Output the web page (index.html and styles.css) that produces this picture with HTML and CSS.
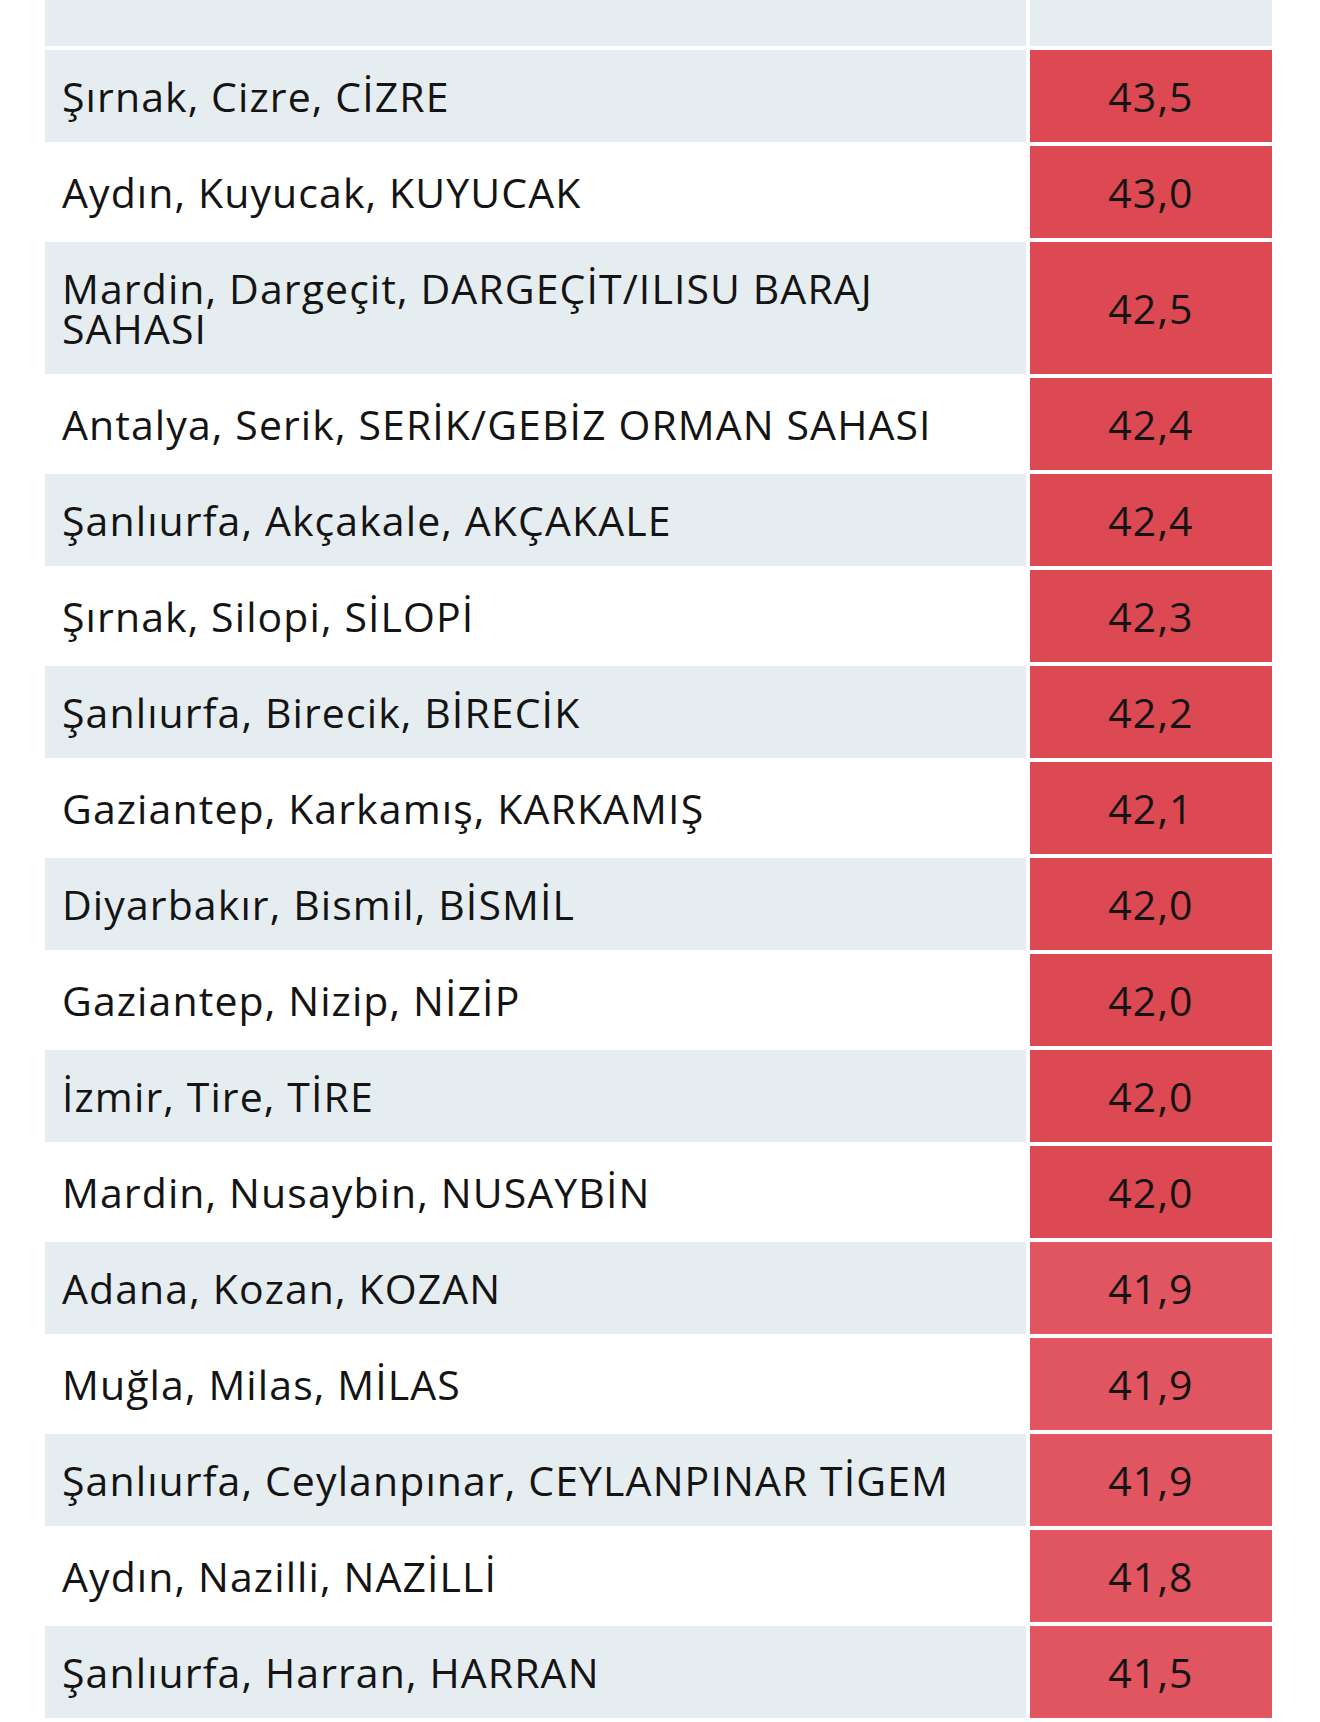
FILE: index.html
```html
<!DOCTYPE html>
<html lang="tr">
<head>
<meta charset="utf-8">
<title>Sıcaklık</title>
<link rel="stylesheet" href="styles.css">
</head>
<body>
<div class="table">
  <div class="cell name stripe head"></div><div class="cell val stripe head"></div>

  <div class="cell name stripe">Şırnak, Cizre, CİZRE</div><div class="cell val hot">43,5</div>
  <div class="cell name">Aydın, Kuyucak, KUYUCAK</div><div class="cell val hot">43,0</div>
  <div class="cell name stripe">Mardin, Dargeçit, DARGEÇİT/ILISU BARAJ SAHASI</div><div class="cell val hot">42,5</div>
  <div class="cell name">Antalya, Serik, SERİK/GEBİZ ORMAN SAHASI</div><div class="cell val hot">42,4</div>
  <div class="cell name stripe">Şanlıurfa, Akçakale, AKÇAKALE</div><div class="cell val hot">42,4</div>
  <div class="cell name">Şırnak, Silopi, SİLOPİ</div><div class="cell val hot">42,3</div>
  <div class="cell name stripe">Şanlıurfa, Birecik, BİRECİK</div><div class="cell val hot">42,2</div>
  <div class="cell name">Gaziantep, Karkamış, KARKAMIŞ</div><div class="cell val hot">42,1</div>
  <div class="cell name stripe">Diyarbakır, Bismil, BİSMİL</div><div class="cell val hot">42,0</div>
  <div class="cell name">Gaziantep, Nizip, NİZİP</div><div class="cell val hot">42,0</div>
  <div class="cell name stripe">İzmir, Tire, TİRE</div><div class="cell val hot">42,0</div>
  <div class="cell name">Mardin, Nusaybin, NUSAYBİN</div><div class="cell val hot">42,0</div>
  <div class="cell name stripe">Adana, Kozan, KOZAN</div><div class="cell val warm">41,9</div>
  <div class="cell name">Muğla, Milas, MİLAS</div><div class="cell val warm">41,9</div>
  <div class="cell name stripe">Şanlıurfa, Ceylanpınar, CEYLANPINAR TİGEM</div><div class="cell val warm">41,9</div>
  <div class="cell name">Aydın, Nazilli, NAZİLLİ</div><div class="cell val warm">41,8</div>
  <div class="cell name stripe">Şanlıurfa, Harran, HARRAN</div><div class="cell val warm">41,5</div>
  <div class="cell name"></div><div class="cell val warm"></div>
</div>
</body>
</html>
```
FILE: styles.css
```css
html, body {
  margin: 0;
  padding: 0;
  background: #ffffff;
}

body {
  font-family: "Open Sans", "Noto Sans", sans-serif;
  color: #141414;
  overflow: hidden;
}

.table {
  display: grid;
  grid-template-columns: 981px 242px;
  column-gap: 4px;
  row-gap: 4px;
  margin-left: 45px;
}

.cell {
  font-size: 41px;
  line-height: 40px;
  letter-spacing: 1.1px;
  padding: 26px 16px 26px 17px;
  min-height: 40px;
  display: flex;
  align-items: center;
}

.cell.head {
  height: 46px;
  min-height: 0;
  padding: 0;
  box-sizing: border-box;
}

.name {
  background: #ffffff;
}

.stripe {
  background: #e6edf1;
}

.val {
  justify-content: center;
  padding-left: 0;
  padding-right: 0;
}

.hot {
  background: #dc4952;
}

.warm {
  background: #e0555f;
}
```
